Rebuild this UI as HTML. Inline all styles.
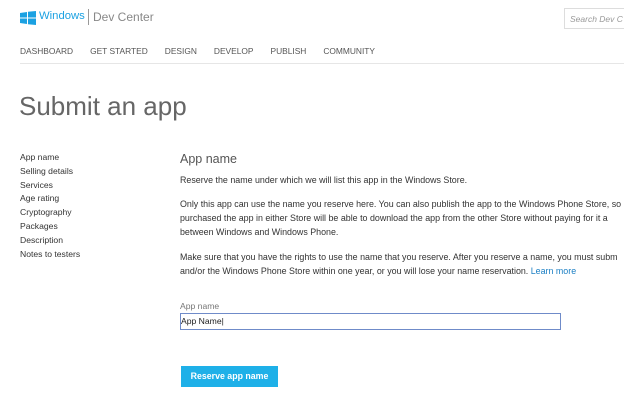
<!DOCTYPE html>
<html><head><meta charset="utf-8"><style>
*{margin:0;padding:0;box-sizing:border-box}
body{width:624px;height:408px;overflow:hidden;background:#fff;font-family:"Liberation Sans",sans-serif;color:#333;position:relative}
.a{position:absolute;white-space:nowrap}
.nav span{margin-right:17px}
p{font-size:8.9px;line-height:14px;color:#333}
</style></head><body>
<svg class="a" style="left:20px;top:11px" width="16" height="14" viewBox="0 0 16 14"><path d="M0 2 L7 1 V6.5 H0Z M8 0.8 L16 0 V6.5 H8Z M0 7.5 H7 V13 L0 12Z M8 7.5 H16 V14 L8 13.2Z" fill="#1ba1e2"/></svg>
<div class="a" style="left:39px;top:10px;font-size:11.3px;color:#1ba1e2">Windows</div>
<div class="a" style="left:88px;top:9px;width:1px;height:16px;background:#999"></div>
<div class="a" style="left:93px;top:10px;font-size:12px;color:#888">Dev Center</div>
<div class="a" style="left:564px;top:8px;width:70px;height:21px;border:1px solid #ddd;font-size:8.5px;font-style:italic;color:#999;padding:5px 0 0 5px">Search Dev C</div>
<div class="a nav" style="left:20px;top:46px;font-size:8.4px;color:#555"><span>DASHBOARD</span><span>GET STARTED</span><span>DESIGN</span><span>DEVELOP</span><span>PUBLISH</span><span>COMMUNITY</span></div>
<div class="a" style="left:20px;top:63px;width:604px;height:1px;background:#e6e6e6"></div>
<div class="a" style="left:19px;top:91px;font-size:26px;color:#666">Submit an app</div>
<div class="a" style="left:20px;top:151px;font-size:8.6px;line-height:13.8px;color:#333">App name<br>Selling details<br>Services<br>Age rating<br>Cryptography<br>Packages<br>Description<br>Notes to testers</div>
<div class="a" style="left:180px;top:152px;font-size:12.5px;color:#555">App name</div>
<div class="a" style="left:180px;top:173px">
<p>Reserve the name under which we will list this app in the Windows Store.</p>
<p style="margin-top:10px">Only this app can use the name you reserve here. You can also publish the app to the Windows Phone Store, so<br>purchased the app in either Store will be able to download the app from the other Store without paying for it a<br>between Windows and Windows Phone.</p>
<p style="margin-top:11px">Make sure that you have the rights to use the name that you reserve. After you reserve a name, you must subm<br>and/or the Windows Phone Store within one year, or you will lose your name reservation. <span style="color:#1b7fc4">Learn more</span></p>
</div>
<div class="a" style="left:180px;top:301px;font-size:8.6px;color:#777">App name</div>
<div class="a" style="left:180px;top:313px;width:381px;height:17px;border:1px solid #6f8bc9;font-size:8.6px;padding:2px 0 0 0;color:#222">App Name|</div>
<div class="a" style="left:181px;top:366px;width:97px;height:21px;background:#1eb0e8;color:#fff;font-weight:bold;font-size:8.8px;text-align:center;line-height:21px">Reserve app name</div>
</body></html>
